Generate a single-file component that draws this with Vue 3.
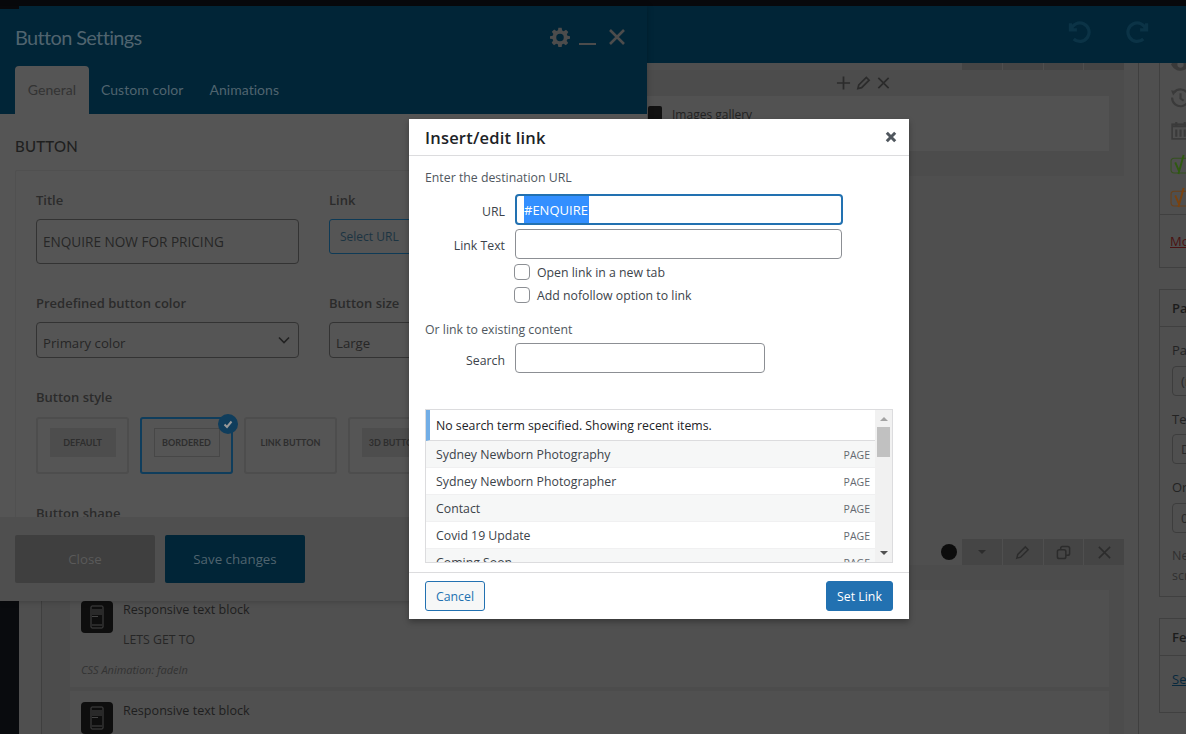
<script setup>
const cards = [
  { label: 'DEFAULT', kind: 'filled' },
  { label: 'BORDERED', kind: 'outlined', selected: true },
  { label: 'LINK BUTTON', kind: 'plain' },
  { label: '3D BUTTON', kind: 'filled' }
]
const results = [
  'Sydney Newborn Photography',
  'Sydney Newborn Photographer',
  'Contact',
  'Covid 19 Update',
  'Coming Soon'
]
</script>

<template>
  <div class="page">
    <div class="topstrip"></div>
    <header class="topbar">
      <svg class="hist" viewBox="0 0 24 24"><path d="M5 4v6h6M5.5 10A8.5 8.5 0 1 1 8 18.5" /></svg>
      <svg class="hist" viewBox="0 0 24 24"><path d="M19 4v6h-6M18.5 10A8.5 8.5 0 1 0 16 18.5" /></svg>
    </header>

    <div class="workspace">
      <aside class="blackside"></aside>
      <main class="builder">
        <section class="block first">
          <div class="tools"><span></span><span></span><span></span><span></span></div>
          <div class="blockbody">
            <div class="miniactions">
              <svg viewBox="0 0 16 16"><path d="M8 1v14M1 8h14" /></svg>
              <svg viewBox="0 0 16 16"><path d="M2 14l1-4 8-8 3 3-8 8z" /></svg>
              <svg viewBox="0 0 16 16"><path d="M2.5 2.5l11 11M13.5 2.5l-11 11" /></svg>
            </div>
            <div class="innerrow">
              <span class="galleryicon"></span>
              <span class="gallerytext">Images gallery</span>
            </div>
          </div>
        </section>

        <section class="block second">
          <div class="tools lower">
            <i class="dot"></i>
            <span><b class="caret"></b></span>
            <span><svg viewBox="0 0 16 16"><path d="M2 14l1-4 8-8 3 3-8 8z" /></svg></span>
            <span><svg viewBox="0 0 16 16"><rect x="1.5" y="5" width="9" height="9.5" rx="2" /><path d="M5 5V3.5a2 2 0 0 1 2-2h5.5a2 2 0 0 1 2 2V9a2 2 0 0 1-2 2h-2" /></svg></span>
            <span><svg viewBox="0 0 16 16"><path d="M2 2l12 12M14 2L2 14" /></svg></span>
          </div>
          <div class="blockbody low">
            <article class="item one">
              <div class="itemhead">
                <span class="tile"><svg viewBox="0 0 32 32"><rect x="10" y="5" width="12" height="22" rx="1" /><path d="M11 9h10M11 11h10M11 13h10M11 15.500h6M11 24h10" /></svg></span>
                <div>
                  <div class="itemname">Responsive text block</div>
                  <div class="itemtext">LETS GET TO</div>
                </div>
              </div>
              <div class="anim">CSS Animation: fadeIn</div>
            </article>
            <article class="item">
              <div class="itemhead">
                <span class="tile"><svg viewBox="0 0 32 32"><rect x="10" y="5" width="12" height="22" rx="1" /><path d="M11 9h10M11 11h10M11 13h10M11 15.500h6M11 24h10" /></svg></span>
                <div class="itemname">Responsive text block</div>
              </div>
            </article>
          </div>
        </section>
      </main>

      <aside class="sidebar">
        <div class="box pub">
          <div class="pubrows">
            <svg class="pubicon" viewBox="0 0 20 20"><path d="M1 10c3-5 6-6 9-6s6 1 9 6c-3 5-6 6-9 6s-6-1-9-6z" fill="#3a3a3a" /><circle cx="10" cy="10" r="3" fill="#505050" /></svg>
            <svg class="pubicon" viewBox="0 0 20 20"><path d="M4 5a8 8 0 1 1-2 5" fill="none" stroke="#3a3a3a" stroke-width="2" /><path d="M10 6v5l3 2" fill="none" stroke="#3a3a3a" stroke-width="2" /><path d="M1 3l5 1-3 4z" fill="#3a3a3a" /></svg>
            <svg class="pubicon" viewBox="0 0 20 20"><rect x="2" y="4" width="16" height="14" fill="none" stroke="#3a3a3a" stroke-width="1.500" /><path d="M2 6h16M6 2v4M14 2v4M6 9v7M10 9v7M14 9v7" stroke="#3a3a3a" stroke-width="2" /></svg>
            <svg class="pubicon" viewBox="0 0 20 20"><rect x="1" y="4" width="17" height="14" rx="3" fill="none" stroke="#35521f" stroke-width="1" /><path d="M5 8l3.500 8M13 1L8 19" fill="none" stroke="#2f5a10" stroke-width="1.800" /></svg>
            <svg class="pubicon" viewBox="0 0 20 20"><rect x="1" y="4" width="17" height="14" rx="3" fill="none" stroke="#6a401a" stroke-width="1" /><path d="M5 8l3.500 8M13 1L8 19" fill="none" stroke="#7a420e" stroke-width="1.800" /></svg>
          </div>
          <div class="pubfoot"><a>Move to Trash</a></div>
        </div>

        <div class="box attrs">
          <h3>Page Attributes</h3>
          <div class="boxbody">
            <label>Parent</label>
            <div class="side-field">(no parent)</div>
            <label>Template</label>
            <div class="side-field">Default template</div>
            <label>Order</label>
            <div class="side-field">0</div>
            <p>Need help? Use the Help tab above your<br />screen title.</p>
          </div>
        </div>

        <div class="box">
          <h3>Featured image</h3>
          <div class="boxbody short"><a class="bluelink">Set featured image</a></div>
        </div>
      </aside>
    </div>

    <section class="settings">
      <i class="notch"></i>
      <div class="set-head">
        <div class="set-titlebar">
          <h2>Button Settings</h2>
          <div class="wincontrols">
            <svg class="gear" viewBox="0 0 24 24"><path d="M10 1h4l.6 3.200 1.900.8 2.700-1.800 2.800 2.800-1.800 2.700.8 1.900L24 11v3l-3.200.6-.8 1.900 1.800 2.700-2.800 2.800-2.700-1.800-1.900.8L14 24h-4l-.6-3.200-1.900-.8-2.700 1.800L2 19l1.800-2.700-.8-1.900L0 14v-3l3.200-.6.8-1.900L2.200 5.800 5 3l2.700 1.800 1.900-.8zM12 8a4.500 4.500 0 1 0 0 9 4.500 4.500 0 0 0 0-9z" fill-rule="evenodd" /></svg>
            <i class="minimize"></i>
            <svg class="winclose" viewBox="0 0 18 18"><path d="M2 2l14 14M16 2L2 16" /></svg>
          </div>
        </div>
        <nav class="tabs">
          <span class="tab active">General</span>
          <span class="tab">Custom color</span>
          <span class="tab">Animations</span>
        </nav>
      </div>

      <div class="set-body">
        <h4>BUTTON</h4>
        <div class="panel">
          <div class="formgrid">
            <div>
              <div class="fl">Title</div>
              <div class="finput tall">ENQUIRE NOW FOR PRICING</div>
            </div>
            <div>
              <div class="fl">Link</div>
              <div class="selecturl">Select URL</div>
            </div>
            <div>
              <div class="fl">Predefined button color</div>
              <div class="finput sel">Primary color
                <svg viewBox="0 0 12 8"><path d="M1 1.500l5 5 5-5" /></svg>
              </div>
            </div>
            <div>
              <div class="fl">Button size</div>
              <div class="finput sel wide">Large</div>
            </div>
          </div>
          <div class="fl">Button style</div>
          <div class="cards">
            <div v-for="c in cards" :key="c.label" class="card" :class="{ selected: c.selected }">
              <span class="sample" :class="c.kind">{{ c.label }}</span>
              <i v-if="c.selected" class="badge">
                <svg viewBox="0 0 12 12"><path d="M2.500 6.500l2.500 2.500 4.500-5.500" /></svg>
              </i>
            </div>
          </div>
          <div class="fl shape">Button shape</div>
        </div>
      </div>

      <div class="set-foot">
        <span class="btn close">Close</span>
        <span class="btn save">Save changes</span>
      </div>
    </section>

    <section class="dialog">
      <div class="d-head">
        <h1>Insert/edit link</h1>
        <svg viewBox="0 0 12 12"><path d="M1.800 1.800l8.400 8.400M10.200 1.800l-8.400 8.400" /></svg>
      </div>
      <div class="d-body">
        <div class="d-note">Enter the destination URL</div>
        <div class="d-row url">
          <span class="d-label">URL</span>
          <div class="d-input focus"><span class="selection">#ENQUIRE</span></div>
        </div>
        <div class="d-row text">
          <span class="d-label low">Link Text</span>
          <div class="d-input"></div>
        </div>
        <div class="d-check c1"><i></i>Open link in a new tab</div>
        <div class="d-check c2"><i></i>Add nofollow option to link</div>
        <div class="d-note second">Or link to existing content</div>
        <div class="d-row search">
          <span class="d-label">Search</span>
          <div class="d-input narrow"></div>
        </div>
        <div class="results">
          <div class="list">
            <div class="message">No search term specified. Showing recent items.</div>
            <div v-for="r in results" :key="r" class="result">
              <span>{{ r }}</span><em>PAGE</em>
            </div>
          </div>
          <div class="scroll">
            <b class="up"></b>
            <i class="thumb"></i>
            <b class="down"></b>
          </div>
        </div>
      </div>
      <div class="d-foot">
        <span class="d-btn cancel">Cancel</span>
        <span class="d-btn set">Set Link</span>
      </div>
    </section>
  </div>
</template>

<style>
html, body { margin: 0; background: #4f4f4f; }
</style>

<style scoped>
* { box-sizing: border-box; }
.page {
  position: relative;
  width: 1186px;
  height: 734px;
  overflow: hidden;
  background: #4f4f4f;
  font-family: "Open Sans", "Noto Sans", sans-serif;
  color: #222;
}
.topstrip { height: 6px; background: #08090c; }
.topbar {
  height: 57px;
  background: #012537;
  display: flex;
  justify-content: flex-end;
  align-items: center;
  gap: 35px;
  padding: 0 34px 6px 0;
}
.hist { width: 26px; height: 26px; fill: none; stroke: #0b3346; stroke-width: 3; }
.workspace { display: flex; height: 671px; }
.blackside { width: 19px; background: #090b0e; }
.builder { width: 1120px; border-right: 1px solid #3f3f3f; padding: 0 14px 0 22px; }
.block { border-left: 1px solid #3f3f3f; }
.block.first { height: 476px; }
.tools { display: flex; justify-content: flex-end; gap: 1px; height: 7px; }
.tools span { width: 39.750px; background: #454545; display: flex; align-items: center; justify-content: center; }
.tools.lower { height: 26px; align-items: stretch; }
.tools.lower .dot { width: 16px; height: 16px; border-radius: 50%; background: #0c0c0c; align-self: center; margin-right: 4px; }
.tools svg { width: 15px; height: 15px; fill: none; stroke: #2c2c2c; stroke-width: 1.600; }
.caret { width: 0; height: 0; border: 4px solid transparent; border-top-color: #2c2c2c; border-bottom: 0; }
.blockbody { background: #4c4c4c; height: 106px; padding: 26px 15px 0 28px; position: relative; }
.blockbody.low { height: 169px; padding-top: 25px; }
.miniactions {
  position: absolute;
  right: 233px;
  top: 5px;
  display: flex;
  gap: 5px;
}
.miniactions svg { width: 15px; height: 16px; fill: none; stroke: #2b2b2b; stroke-width: 1.800; }
.innerrow { height: 55px; background: #525252; display: flex; padding: 10px 0 0 578px; gap: 10px; font-size: 12px; }
.galleryicon { width: 14px; height: 20px; background: #111; border-radius: 2px; }
.gallerytext { color: #222; }
.item { background: #505050; padding: 0 0 0 11px; }
.item.one { height: 97px; margin-bottom: 4px; }
.itemhead { display: flex; gap: 10px; }
.tile { width: 32px; height: 32px; flex: none; background: #0e0e0e; border-radius: 4px; display: block; margin-top: 11px; }
.tile svg { width: 32px; height: 32px; fill: none; stroke: #444; stroke-width: 1; }
.itemname { font-size: 12.600px; line-height: 16px; margin-top: 12px; color: #1e1e1e; }
.itemtext { font-size: 12.300px; line-height: 16px; margin-top: 14px; color: #262626; }
.anim { font-size: 11px; font-style: italic; color: #333; margin-top: 15px; line-height: 14px; }

.sidebar { flex: 1; padding-left: 20px; overflow: hidden; white-space: nowrap; }
.box { width: 280px; border: 1px solid #404040; margin-bottom: 21px; font-size: 13px; color: #232323; }
.box.pub { height: 205px; display: flex; flex-direction: column; border-top: 0; }
.pubrows { height: 152px; border-bottom: 1px solid #404040; padding: 0 0 6px 10px; display: flex; flex-direction: column; gap: 12.300px; justify-content: flex-end; }
.pubicon { width: 21px; height: 21px; display: block; flex: none; }
.pubfoot { padding: 17px 0 0 10px; }
.pubfoot a { color: #4a1212; text-decoration: underline; }
.box h3 { margin: 0; font-size: 13px; font-weight: 600; height: 37px; line-height: 37px; padding-left: 12px; border-bottom: 1px solid #404040; color: #1c1c1c; }
.boxbody { padding: 15px 12px 0; height: 269px; }
.boxbody.short { height: 56px; padding-top: 10px; }
.boxbody label { display: block; line-height: 16px; font-weight: 500; }
.side-field { height: 30px; width: 200px; border: 1px solid #3d3d3d; border-radius: 4px; line-height: 28px; padding-left: 8px; margin: 7.500px 0 15px; color: #282828; }
.boxbody p { margin: -1.500px 0 0; line-height: 20px; color: #303030; font-size: 12.500px; }
.bluelink { color: #08293e; text-decoration: underline; line-height: 26px; }

.settings {
  position: absolute;
  left: 0;
  top: 6px;
  width: 647px;
  height: 595px;
  background: #555;
  display: flex;
  flex-direction: column;
  box-shadow: 0 0 6px rgba(0,0,0,.25);
}
.notch { position: absolute; left: 0; top: 0; width: 19px; height: 3px; background: #08090c; }
.set-head { height: 108px; background: #012537; display: flex; flex-direction: column; justify-content: space-between; }
.set-titlebar { display: flex; justify-content: space-between; align-items: center; padding: 18px 21px 0 15px; }
.set-titlebar h2 { margin: 0; font: 400 20px/26px Lato, sans-serif; letter-spacing: -.66px; color: #50646f; }
.wincontrols { display: flex; align-items: center; gap: 9px; }
.gear { width: 20px; height: 20px; fill: #4c4c4c; margin-right: 0; }
.minimize { width: 17px; height: 2px; background: #4c4c4c; margin-top: 13px; }
.winclose { width: 18px; height: 18px; fill: none; stroke: #4c4c4c; stroke-width: 2.600; margin-left: 3px; }
.tabs { display: flex; padding-left: 15px; }
.tab { height: 48px; font: 400 14px/48px Lato, sans-serif; color: #50646f; margin-right: 26px; letter-spacing: .04px; }
.tab.active { width: 74px; text-align: center; background: #555; color: #333; border-radius: 4px 4px 0 0; margin-right: 12px; }
.set-body { flex: 1; padding: 22px 15px 0; overflow: hidden; }
.set-body h4 { margin: 0 0 14px; font: 500 15px/20px Lato, sans-serif; color: #1f1f1f; letter-spacing: .2px; }
.panel { border: 1px solid #505050; border-radius: 2px; height: 400px; padding: 20px 20px 0; }
.fl { font-size: 13px; line-height: 18px; font-weight: 600; color: #2b2b2b; margin-bottom: 10px; }
.formgrid { display: grid; grid-template-columns: 263px 300px; column-gap: 30px; row-gap: 30px; margin-bottom: 30px; }
.finput { height: 36px; border: 1px solid #333; border-radius: 4px; font-size: 13.200px; line-height: 40px; padding-left: 6px; color: #262626; position: relative; }
.finput.tall { height: 45px; line-height: 44px; font-size: 13.600px; }
.finput.sel svg { position: absolute; right: 8px; top: 13px; width: 12px; height: 8px; fill: none; stroke: #222; stroke-width: 1.600; }
.selecturl { width: 100px; height: 35px; border: 1px solid #0e3a56; border-radius: 3px; font-size: 12px; line-height: 34px; padding-left: 10px; color: #1c3442; }
.cards { display: flex; gap: 11px; margin-top: 11px; }
.card { position: relative; flex: none; width: 93px; height: 57px; border: 2px solid #4d4d4d; border-radius: 3px; display: flex; align-items: center; justify-content: center; padding-bottom: 6px; }
.card.selected { width: 93px; border-color: #0f3d5c; }
.sample { width: 66px; height: 29px; display: flex; align-items: center; justify-content: center; font: 700 9px/1 Lato, sans-serif; color: #2e2e2e; white-space: nowrap; background: #4d4d4d; }
.sample.outlined { background: transparent; border: 1px solid #474747; }
.sample.plain { background: transparent; }
.badge { position: absolute; right: -7px; top: -5px; width: 20px; height: 20px; background: #0f3d5c; border-radius: 50%; display: flex; align-items: center; justify-content: center; }
.badge svg { width: 12px; height: 12px; fill: none; stroke: #999; stroke-width: 2; }
.fl.shape { margin-top: 30px; }
.set-foot { height: 84px; background: #4f4f4f; padding: 18px 15px; display: flex; gap: 10px; }
.btn { width: 140px; height: 48px; font-size: 13.300px; line-height: 48px; text-align: center; border-radius: 2px; }
.btn.close { background: #3f3f3f; color: #5a5a5a; }
.btn.save { background: #012537; color: #50646f; }

.dialog {
  position: absolute;
  left: 409px;
  top: 119px;
  width: 500px;
  height: 500px;
  background: #fff;
  box-shadow: 0 3px 6px rgba(0,0,0,.3);
  display: flex;
  flex-direction: column;
  font-size: 12.300px;
  color: #3c434a;
}
.d-head { height: 37px; border-bottom: 1px solid #dcdcde; display: flex; align-items: center; justify-content: space-between; padding: 0 12px 0 16px; }
.d-head h1 { margin: 0; font-size: 16.500px; font-weight: 600; letter-spacing: .2px; color: #1d2327; }
.d-head svg { width: 12px; height: 12px; fill: none; stroke: #50575e; stroke-width: 3; }
.d-body { flex: 1; padding: 0 16px; position: relative; }
.d-note { height: 18px; line-height: 18px; margin-top: 13px; color: #50575e; }
.d-note.second { margin-top: 18px; }
.d-row { display: flex; align-items: flex-start; gap: 10px; }
.d-row.url { margin-top: 7px; }
.d-row.text { margin-top: 4px; }
.d-row.search { margin-top: 4px; }
.d-label { width: 80px; text-align: right; flex: none; line-height: 18px; margin-top: 9px; }
.d-label.low { margin-top: 8px; }
.d-input { width: 327px; height: 30px; border: 1px solid #8c8f94; border-radius: 4px; }
.d-input.focus { width: 328px; height: 31px; border: 2px solid #2271b1; padding: 0 0 0 7px; font-size: 13px; line-height: 28px; overflow: hidden; }
.selection { display: inline-block; background: #338fff; color: #fff; height: 27px; vertical-align: top; width: 65px; white-space: nowrap; }
.d-input.narrow { width: 250px; }
.d-check { display: flex; align-items: center; gap: 7px; height: 16px; margin-left: 89px; }
.d-check i { width: 16px; height: 16px; border: 1px solid #8c8f94; border-radius: 4px; }
.d-check.c1 { margin-top: 5px; }
.d-check.c2 { margin-top: 7px; }
.results { position: absolute; left: 16px; top: 253px; width: 468px; height: 154px; border: 1px solid #dcdcde; display: flex; overflow: hidden; }
.list { flex: 1; overflow: hidden; }
.message { height: 31px; line-height: 31px; border-left: 4px solid #72aee6; border-bottom: 1px solid #dcdcde; padding-left: 6px; color: #1d2327; }
.result { height: 27px; display: flex; justify-content: space-between; align-items: center; padding: 0 5px 0 10px; border-bottom: 1px solid #f0f0f1; }
.result:nth-child(even) { background: #f6f7f7; }
.result em { font-style: normal; font-size: 10.500px; color: #646970; padding-top: 2px; }
.scroll { width: 17px; background: #f1f1f1; position: relative; display: flex; flex-direction: column; align-items: center; }
.up { width: 0; height: 0; border: 4px solid transparent; border-bottom-color: #a3a3a3; border-top: 0; margin-top: 7px; }
.thumb { width: 13px; height: 30px; background: #c1c1c1; margin-top: 6px; }
.down { position: absolute; bottom: 7px; width: 0; height: 0; border: 4px solid transparent; border-top-color: #505050; border-bottom: 0; }
.d-foot { height: 47px; border-top: 1px solid #dcdcde; display: flex; justify-content: space-between; padding: 8px 16px 0; }
.d-btn { height: 30px; line-height: 30px; border-radius: 3px; font-size: 12.300px; text-align: center; border: 1px solid #2271b1; }
.d-btn.cancel { width: 60px; background: #f6f7f7; color: #2271b1; }
.d-btn.set { width: 67px; background: #2271b1; color: #fff; }
</style>
